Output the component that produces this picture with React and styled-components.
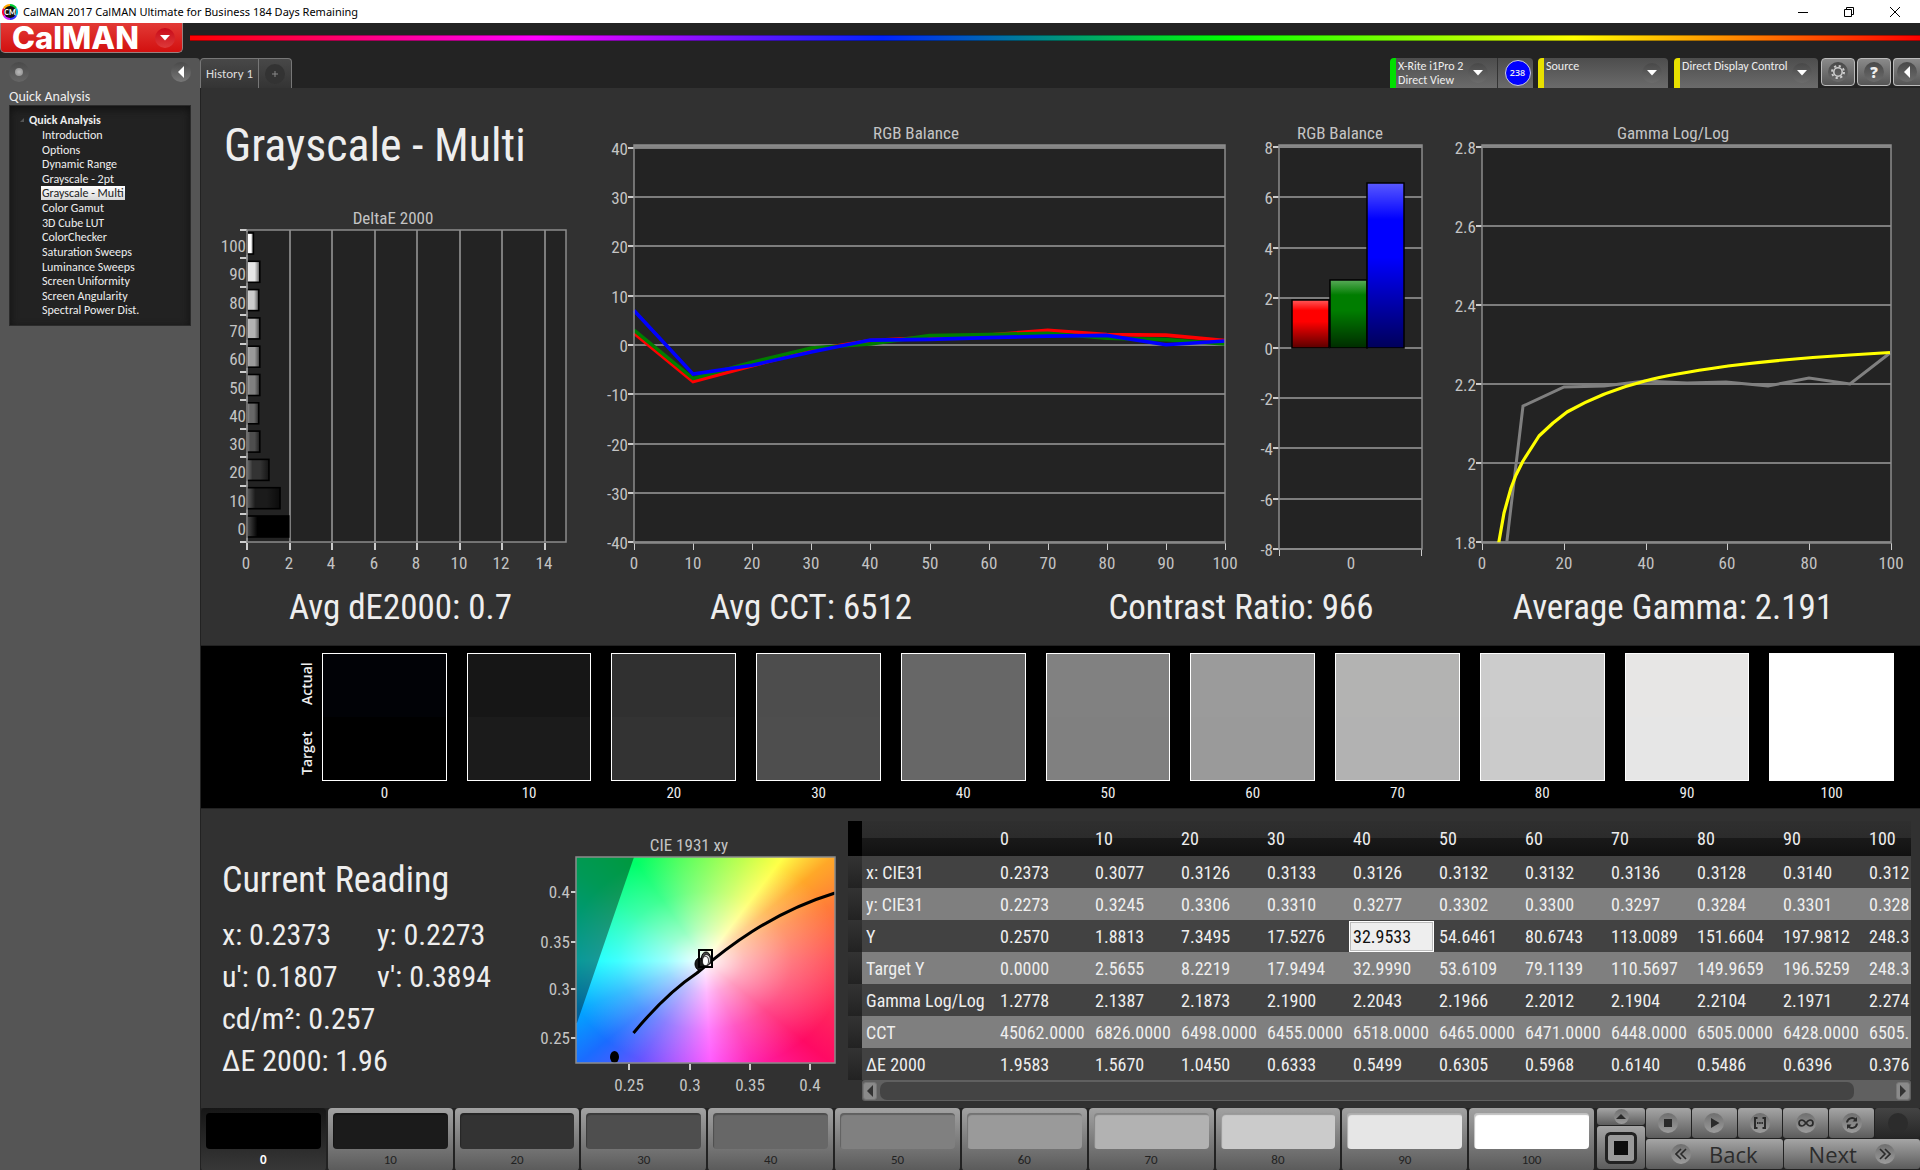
import React from "react";
import styled, { createGlobalStyle, css } from "styled-components";

const narrow = '"Roboto Condensed", "Carlito", "Lato", sans-serif';
const ui = '"Carlito", "Lato", sans-serif';

const GlobalStyle = createGlobalStyle`
  *, *::before, *::after { box-sizing: border-box; }
  body { margin: 0; background: #232323; color: #eee; font-family: ${ui}; overflow: hidden; }
  button, input { font: inherit; color: inherit; }
  button { margin: 0; padding: 0; border: 0; background: none; cursor: pointer; }
  h1, h2, p, ul, dl, dd, figure { margin: 0; padding: 0; font-weight: 400; }
  ul { list-style: none; }
`;

const Window = styled.div`
  display: flex;
  flex-direction: column;
  min-height: 100vh;
`;

const TitleBar = styled.div`
  display: flex;
  align-items: center;
  height: 23px;
  padding: 0 16px 0 2px;
  gap: 5px;
  background: #fff;
  color: #000;
  white-space: nowrap;
`;

const WindowTitle = styled.span`
  flex: 1;
  font: 11px "Noto Sans", sans-serif;
`;

const WindowControls = styled.div`
  display: flex;
  gap: 28px;
  button { display: flex; }
`;

const Brand = styled.header`
  display: flex;
  align-items: flex-start;
  gap: 7px;
  height: 35px;
`;

const LogoButton = styled.button`
  display: flex;
  align-items: center;
  justify-content: space-between;
  width: 183px;
  height: 30px;
  padding: 0 7px 0 11px;
  border: 1px solid #9a8080;
  border-top: 0;
  border-radius: 0 0 5px 5px;
  background: linear-gradient(#e23a36, #d3100f);
  color: #fff;
  font: 800 31px/28px Inter, sans-serif;
`;

const Round = styled.span`
  display: inline-flex;
  flex: none;
  align-items: center;
  justify-content: center;
  width: ${(p) => p.$size || 20}px;
  height: ${(p) => p.$size || 20}px;
  border-radius: 50%;
  background: ${(p) => p.$bg || "linear-gradient(#484848, #6c6c6c)"};
`;

const Rainbow = styled.div`
  flex: 1;
  height: 6px;
  margin-top: 12px;
  border: 1px solid rgba(0, 0, 0, 0.35);
  border-width: 1px 0;
  background: linear-gradient(90deg, #f00, #f0f 20%, #02f 40%, #0f0 60%, #ff0 80%, #f00) border-box;
`;

const Body = styled.div`
  flex: 1;
  display: grid;
  grid-template-columns: 200px minmax(0, 1fr);
`;

const Sidebar = styled.aside`
  padding: 4px 9px;
  background: #555;
  border-radius: 0 4px 0 0;
`;

const SideTop = styled.div`
  display: flex;
  justify-content: space-between;
  height: 20px;
`;

const SideTitle = styled.h2`
  margin-top: 7px;
  font-size: 14px;
  line-height: 16px;
`;

const Tree = styled.nav`
  padding: 6px 8px 7px 10px;
  min-height: 221px;
  border: 1px solid #2b2b2b;
  background: #222;
  box-shadow: inset 0 3px 8px #111;
  font-size: 12px;
`;

const TreeRoot = styled.div`
  display: flex;
  align-items: center;
  gap: 5px;
  height: 16px;
  font-weight: 700;
`;

const TreeList = styled.ul`
  display: grid;
  grid-auto-rows: 1fr;
  height: 190px;
  padding-left: 21px;
`;

const TreeLink = styled.a`
  display: inline-block;
  padding: 0 1px;
  line-height: 14px;
  color: inherit;
  text-decoration: none;
  white-space: nowrap;
  ${(p) => p.$active && css`background: linear-gradient(#fff, #d8d8d8); color: #222;`}
`;

const Main = styled.main`
  display: flex;
  flex-direction: column;
  min-width: 0;
`;

const TabRow = styled.div`
  display: flex;
  justify-content: space-between;
  height: 30px;
`;

const Tabs = styled.div`
  display: flex;
  border: 1px solid #777;
  border-bottom: 0;
  border-radius: 4px 4px 0 0;
  background: linear-gradient(#484848, #343434);
`;

const Tab = styled.button`
  display: flex;
  align-items: center;
  justify-content: center;
  width: ${(p) => p.$w}px;
  font-size: 13px;
  color: #ddd;
  & + & { border-left: 1px solid #777; }
`;

const Devices = styled.div`
  display: flex;
  overflow: hidden;
`;

const Device = styled.div`
  display: flex;
  width: ${(p) => p.$w}px;
  margin-right: ${(p) => p.$gap}px;
  border-radius: 4px 4px 0 0;
  border-left: 6px solid ${(p) => p.$color};
  background: linear-gradient(#4d4d4d, #6b6b6b);
`;

const DeviceButton = styled.button`
  flex: 1;
  display: flex;
  justify-content: space-between;
  padding: 1px 6px 0 2px;
  font-size: 12px;
  line-height: 14px;
  text-align: left;
  white-space: nowrap;
  ${Round} { margin-top: 4px; margin-left: 2px; }
`;

const Count = styled.button`
  display: flex;
  align-items: center;
  justify-content: center;
  width: 36px;
  margin-left: 3px;
  padding-left: 4px;
  border-left: 1px solid #333;
  span {
    width: 26px;
    height: 26px;
    border: 1px solid #ccd;
    border-radius: 50%;
    background: #00f;
    font: 600 9px/24px "Open Sans", sans-serif;
  }
`;

const Tool = styled.button`
  flex: none;
  width: 34px;
  height: 28px;
  margin-right: 2px;
  border: 1px solid #bbb;
  border-radius: 4px;
  background: linear-gradient(#8a8a8a, #555);
  &:last-child { width: 27px; margin: 0; border-right: 0; border-radius: 4px 0 0 4px; }
`;

const HelpMark = styled.b`
  font: 800 15px/20px "Open Sans", sans-serif;
`;

const Page = styled.div`
  flex: 1;
  display: flex;
  flex-direction: column;
  border-left: 1px solid #222;
  background: #313131;
`;

const ChartSection = styled.section`
  padding-top: 32px;
  padding-bottom: 9px;
`;

const Charts = styled.div`
  display: grid;
  grid-template-columns: 399fr 640fr 200fr 480fr;
  align-items: end;
`;

const Column = styled.div`
  display: flex;
  flex-direction: column;
`;

const Title = styled.h1`
  margin-bottom: 20px;
  padding-left: 23px;
  font: 46px/50px ${narrow};
  white-space: nowrap;
`;

const Plot = styled.svg`
  display: block;
  width: 100%;
  height: auto;
  overflow: visible;
  font: 17px ${narrow};
  fill: #c4c4c4;
`;

const Stats = styled.div`
  display: grid;
  grid-template-columns: 399fr 422fr 438fr 426fr 34fr;
  font: 35px/56px ${narrow};
  text-align: center;
  white-space: nowrap;
`;

const Band = styled.section`
  display: grid;
  grid-template-columns: 121px 1fr;
  padding: 7px 26px 3px 0;
  background: #000;
  border: 1px solid #222;
  border-width: 1px 0;
`;

const Sides = styled.div`
  display: grid;
  grid-template-rows: 62px 76px;
  justify-content: end;
  padding-right: 8px;
  font: 600 14px/14px "Open Sans", sans-serif;
  span {
    writing-mode: vertical-rl;
    transform: rotate(180deg);
    text-align: center;
  }
`;

const Swatches = styled.div`
  display: grid;
  grid-template-columns: repeat(11, 1fr);
  gap: 20px;
`;

const Swatch = styled.figure`
  font: 15px/24px ${narrow};
  text-align: center;
  div {
    height: 128px;
    border: 1px solid #fff;
    background: linear-gradient(${(p) => p.$actual} 50%, ${(p) => p.$target} 50%);
  }
`;

const Lower = styled.section`
  display: grid;
  grid-template-columns: 329fr 317fr 1064fr;
  padding: 6px 9px 0 0;
  height: 299px;
`;

const Reading = styled.div`
  padding: 42px 0 0 21px;
  font: 30px/42px ${narrow};
  white-space: nowrap;
  h2 { margin-bottom: 11px; font-size: 36px; line-height: 46px; }
`;

const Pair = styled.div`
  display: grid;
  grid-template-columns: 155px 1fr;
`;

const TablePane = styled.div`
  min-width: 0;
  padding: 6px 0 0 1px;
`;

const TableClip = styled.div`
  overflow: hidden;
`;

const Table = styled.table`
  width: 1103px;
  table-layout: fixed;
  border-collapse: collapse;
  font: 18px/24px ${narrow};
  text-align: left;
  th, td { padding: 1px 0 0 4px; font-weight: 400; white-space: nowrap; }
  thead tr { height: 35px; background: linear-gradient(#2f2f2f, #2b2b2b 50%, #191919 50%, #111); }
  tbody tr { height: 32px; background: #424242; }
  tbody tr:nth-child(even) { background: #7f7f7f; }
  td.mark, th.mark { background: linear-gradient(#333, #222); }
  th.mark { background: #000; }
  td.edit { padding: 0; }
`;

const CellInput = styled.input`
  display: block;
  width: 85px;
  height: 31px;
  padding: 1px 0 0 3px;
  border: 1px solid #fff;
  box-shadow: inset 0 0 0 1px #bbb;
  background: #eee;
  color: #111;
`;

const Scroll = styled.div`
  display: flex;
  align-items: center;
  gap: 3px;
  height: 21px;
  margin-left: 14px;
  padding: 0 1px;
  border-radius: 3px;
  background: #606060;
  button {
    display: flex;
    align-items: center;
    justify-content: center;
    width: 14px;
    height: 18px;
    border: 1px solid #777;
    border-radius: 3px;
    background: #8a8a8a;
  }
`;

const Thumb = styled.div`
  flex: 975;
  height: 18px;
  border-radius: 7px;
  background: #444;
`;

const Gap = styled.div`
  flex: 36;
`;

const Footer = styled.footer`
  display: flex;
  height: 62px;
  padding-bottom: 1px;
  background: #222;
`;

const Levels = styled.div`
  flex: 1;
  display: grid;
  grid-template-columns: repeat(11, 1fr);
  gap: 2px;
  margin-right: 3px;
`;

const Level = styled.button`
  display: flex;
  flex-direction: column;
  padding: 5px 5px 0;
  border-radius: 4px;
  background: ${(p) => (p.$on ? "linear-gradient(#161616, #383838)" : "linear-gradient(#a2a2a2, #5a5a5a)")};
  color: ${(p) => (p.$on ? "#fff" : "#222")};
  font-size: 13px;
  font-weight: ${(p) => (p.$on ? 700 : 400)};
  line-height: 22px;
  text-align: center;
  i {
    width: 100%;
    height: 36px;
    border-radius: 4px;
    background: ${(p) => p.$color};
    box-shadow: inset 1px 2px 1px rgba(0, 0, 0, 0.25);
  }
  span { width: 100%; }
`;

const metal = "linear-gradient(#a5a5a5, #5c5c5c)";

const PatternBox = styled.div`
  display: grid;
  grid-template-rows: 17px 1fr;
  gap: 1px;
  width: 48px;
  margin-right: 1px;
`;

const Key = styled.button`
  display: flex;
  align-items: center;
  justify-content: center;
  gap: 18px;
  overflow: hidden;
  border-radius: 3px;
  background: ${(p) => (p.$off ? "linear-gradient(#444, #262626)" : metal)};
  color: #2c2c2c;
  font: 500 22px/28px "Open Sans", sans-serif;
`;

const Transport = styled.div`
  display: grid;
  grid-template-rows: 30px 1fr;
  gap: 1px;
  width: 274px;
`;

const KeyRow = styled.div`
  display: grid;
  grid-template-columns: repeat(${(p) => p.$n}, 1fr);
  gap: 1px;
`;

const dim = "linear-gradient(#6f6f6f, #9c9c9c)";

const Down = () => (
  <svg width="10" height="6" aria-hidden="true"><path d="M0 0H10L5 5.5Z" fill="#fff" /></svg>
);
const Left = ({ color = "#fff" }) => (
  <svg width="6" height="12" aria-hidden="true"><path d="M6 0V12L0 6Z" fill={color} /></svg>
);

const steps = [0, 10, 20, 30, 40, 50, 60, 70, 80, 90, 100];
const grays = ["#000", "#1b1b1b", "#333", "#4e4e4e", "#676767", "#808080", "#9a9a9a", "#b2b2b2", "#cbcbcb", "#e6e6e6", "#fff"];
const actuals = ["#010206", "#161616", "#303030", "#4d4d4d", "#676767", "#818181", "#9b9b9b", "#b3b3b2", "#cccccc", "#e7e6e5", "#fff"];

const pages = ["Introduction", "Options", "Dynamic Range", "Grayscale - 2pt", "Grayscale - Multi", "Color Gamut", "3D Cube LUT", "ColorChecker", "Saturation Sweeps", "Luminance Sweeps", "Screen Uniformity", "Screen Angularity", "Spectral Power Dist."];

function Frame({ box, title, titleX, xTicks, yTicks, band, children, baseline }) {
  const [x0, y0, x1, y1] = box;
  return (
    <>
      <text x={titleX} y={baseline} textAnchor="middle">{title}</text>
      <rect x={x0} y={y0} width={x1 - x0} height={y1 - y0} fill="#232323" />
      {yTicks.map(([v, y]) => (
        <g key={v}>
          <path d={`M${x0} ${y}H${x1}`} stroke="#7d7d7d" strokeWidth="2" shapeRendering="crispEdges" />
          <path d={`M${x0 - 6} ${y}H${x0}`} stroke="#ccc" strokeWidth="2" shapeRendering="crispEdges" />
          <text x={x0 - 6} y={y + 7} textAnchor="end">{v}</text>
        </g>
      ))}
      {xTicks.map(([v, x]) => (
        <g key={v}>
          <path d={`M${x} ${y1}V${y1 + 7}`} stroke="#ccc" shapeRendering="crispEdges" />
          <text x={x} y={y1 + 26} textAnchor="middle">{v}</text>
        </g>
      ))}
      {band && <rect x={x0} y={y0} width={x1 - x0} height="3" fill="#858585" />}
      {children}
      <rect x={x0} y={y0} width={x1 - x0} height={y1 - y0} fill="none" stroke="#8c8c8c" strokeWidth="1.5" />
    </>
  );
}

const deltas = [0.3, 0.6, 0.55, 0.6, 0.6, 0.6, 0.55, 0.6, 1.03, 1.55, 1.96];

function DeltaChart() {
  return (
    <Plot viewBox="0 0 399 390" role="img" aria-label="DeltaE 2000">
      <defs>
        <linearGradient id="barShade">
          <stop offset="0" stopColor="#fff" stopOpacity=".3" />
          <stop offset=".25" stopColor="#fff" stopOpacity="0" />
          <stop offset=".6" stopColor="#000" stopOpacity="0" />
          <stop offset="1" stopColor="#000" stopOpacity=".6" />
        </linearGradient>
      </defs>
      <text x="192" y="34" textAnchor="middle">DeltaE 2000</text>
      <rect x="46" y="40" width="319" height="312" fill="#232323" />
      {[0, 2, 4, 6, 8, 10, 12, 14].map((v) => {
        const x = Math.round(46 + v * 21.25);
        return (
          <g key={v}>
            <path d={`M${x} 40V352`} stroke="#7d7d7d" strokeWidth="2" shapeRendering="crispEdges" />
            <path d={`M${x} 353V360`} stroke="#ccc" strokeWidth="2" shapeRendering="crispEdges" />
            <text x={x - 1} y="379" textAnchor="middle">{v}</text>
          </g>
        );
      })}
      {deltas.map((d, i) => {
        const y = 43 + i * 28.3;
        return (
          <g key={i}>
            <path d={`M39 ${Math.round(40 + i * 28.4)}H46`} stroke="#ccc" strokeWidth="2" shapeRendering="crispEdges" />
            <text x="45" y={y + 19} textAnchor="end">{100 - i * 10}</text>
            <rect x="46" y={y} width={d * 21.3} height="21" fill={grays[10 - i]} />
            <rect x="46" y={y} width={d * 21.3} height="21" fill="url(#barShade)" stroke="#000" strokeWidth="1.6" />
          </g>
        );
      })}
      <path d="M39 352H46" stroke="#ccc" strokeWidth="2" shapeRendering="crispEdges" />
      <rect x="46" y="40" width="319" height="312" fill="none" stroke="#8c8c8c" strokeWidth="1.5" />
    </Plot>
  );
}

const series = [
  ["#f00", [2.6, -7.2, -4, -0.8, 1.1, 1.7, 2.2, 3.2, 2.3, 2.2, 1.1]],
  ["#007d00", [3.2, -6.6, -3.3, -0.4, 0.4, 2.1, 2.3, 2.6, 1.6, 1.3, 0.4]],
  ["#00f", [7.2, -5.7, -3.9, -1.2, 1.2, 1.35, 1.7, 2, 2.15, 0.25, 1]],
];

function BalanceChart() {
  return (
    <Plot viewBox="0 0 640 460" role="img" aria-label="RGB Balance by level">
      <Frame
        box={[34, 25, 625, 423]} title="RGB Balance" titleX={316} baseline={19} band
        xTicks={steps.map((s) => [s, 34 + Math.round(s * 5.91)])}
        yTicks={[40, 30, 20, 10, 0, -10, -20, -30, -40].map((v) => [v, Math.round(225 - v * 4.93)])}
      >
        {series.map(([c, v]) => (
          <polyline key={c} fill="none" stroke={c} strokeWidth="3.6" points={v.map((n, i) => `${34 + i * 59.1},${226 - n * 4.93}`).join(" ")} />
        ))}
      </Frame>
    </Plot>
  );
}

function BarsChart() {
  const bars = [["#f00", 52, 180, "r"], ["#007d00", 90, 160, "g"], ["#00f", 127, 63, "b"]];
  return (
    <Plot viewBox="0 0 200 460" role="img" aria-label="RGB Balance">
      <defs>
        <linearGradient id="gloss" x2="0" y2="1">
          <stop offset="0" stopColor="#fff" stopOpacity=".35" />
          <stop offset=".22" stopColor="#fff" stopOpacity="0" />
          <stop offset=".45" stopColor="#000" stopOpacity="0" />
          <stop offset="1" stopColor="#000" stopOpacity=".65" />
        </linearGradient>
      </defs>
      <Frame
        box={[39, 25, 182, 429]} title="RGB Balance" titleX={100} baseline={19} band
        xTicks={[]}
        yTicks={[8, 6, 4, 2, 0, -2, -4, -6, -8].map((v) => [v, Math.round(228 - v * 25.1)])}
      >
        <path d="M39.5 429V436M181.5 429V436" stroke="#ccc" />
        <text x="111" y="449" textAnchor="middle">0</text>
        {bars.map(([c, x, y, id]) => (
          <g key={id}>
            <rect x={x} y={y} width="37" height={228 - y} fill={c} />
            <rect x={x} y={y} width="37" height={228 - y} fill="url(#gloss)" stroke="#000" strokeWidth="1.5" />
          </g>
        ))}
      </Frame>
    </Plot>
  );
}

function GammaChart() {
  return (
    <Plot viewBox="0 0 480 460" role="img" aria-label="Gamma Log/Log">
      <Frame
        box={[42, 25, 451, 423]} title="Gamma Log/Log" titleX={233} baseline={19} band
        xTicks={[0, 20, 40, 60, 80, 100].map((v) => [v, 42 + Math.round(v * 4.09)])}
        yTicks={["2.8", "2.6", "2.4", "2.2", "2", "1.8"].map((v, i) => [v, 27 + i * 79])}
      >
        <polyline fill="none" stroke="#808080" strokeWidth="3" points="66.7,423 83,286 124,267 164,266 205,261 247,263 286,262 328,266 369,258 410,264 450,233" />
        <path
          fill="none" stroke="#ff0" strokeWidth="3.2" strokeLinejoin="round"
          d="M58.7 423L64 393L71 368L76 355L83 341L99 316L113 303L127 292C150 279 177 268 205 261C231 254 260 250 288 246C327 241 369 237.500 410 235L450 232.500"
        />
      </Frame>
    </Plot>
  );
}

const Gamut = styled.div`
  width: 100%;
  height: 100%;
  background:
    radial-gradient(140px 112px at 129px 104px, #fff, rgba(255, 255, 255, 0.6) 28%, rgba(255, 255, 255, 0.25) 62%, rgba(255, 255, 255, 0) 100%),
    conic-gradient(from 0deg at 129px 104px, #78ff50, #c0ff48 21deg, #ffff48 37deg, #ffa828 51deg, #ff7c38 66deg, #ff4c54 90deg, #ff0a64 129deg, #ff20b0 155deg, #ff50ff 177deg, #6454ff 213deg, #1a6cff 231deg, #00a8ff 249deg, #00ffff 270deg, #00ff90 305deg, #00ff68 325deg, #48ff58 345deg, #78ff50 360deg);
`;

function CieChart() {
  return (
    <Plot viewBox="0 0 317 290" role="img" aria-label="CIE 1931 xy">
      <text x="159" y="36" textAnchor="middle">CIE 1931 xy</text>
      <foreignObject x="46" y="42" width="259" height="206"><Gamut /></foreignObject>
      <path d="M46 42H104L47 208H46Z" fill="#000" fillOpacity=".4" />
      {[["0.4", 77], ["0.35", 127], ["0.3", 174], ["0.25", 223]].map(([v, y]) => (
        <g key={v}>
          <path d={`M41 ${y}H46`} stroke="#ccc" strokeWidth="2" shapeRendering="crispEdges" />
          <text x="40" y={y + 6} textAnchor="end">{v}</text>
        </g>
      ))}
      {[["0.25", 99], ["0.3", 160], ["0.35", 220], ["0.4", 280]].map(([v, x]) => (
        <g key={v}>
          <path d={`M${x} 249V255`} stroke="#ccc" strokeWidth="2" shapeRendering="crispEdges" />
          <text x={x} y="276" textAnchor="middle">{v}</text>
        </g>
      ))}
      <path d="M103.500 218C120 198 143 174 167 158C195 134 240 98 305 78" fill="none" stroke="#000" strokeWidth="3" />
      <ellipse cx="84.500" cy="242" rx="4.500" ry="6" fill="#000" />
      <ellipse cx="169.500" cy="149" rx="4.500" ry="6" fill="#1b1b1b" stroke="#000" />
      <ellipse cx="176" cy="143" rx="4.500" ry="6" fill="#444" stroke="#000" />
      <rect x="169" y="135" width="13" height="17" fill="none" stroke="#000" strokeWidth="2" />
      <ellipse cx="176.500" cy="145" rx="4" ry="5.500" fill="#ddd" stroke="#222" />
      <ellipse cx="175.500" cy="146" rx="3" ry="4.500" fill="#fff" stroke="#000" strokeWidth=".7" />
      <rect x="46" y="42" width="259" height="206" fill="none" stroke="#8c8c8c" strokeWidth="1.5" />
    </Plot>
  );
}

const rows = [
  ["x: CIE31", "0.2373", "0.3077", "0.3126", "0.3133", "0.3126", "0.3132", "0.3132", "0.3136", "0.3128", "0.3140", "0.312"],
  ["y: CIE31", "0.2273", "0.3245", "0.3306", "0.3310", "0.3277", "0.3302", "0.3300", "0.3297", "0.3284", "0.3301", "0.328"],
  ["Y", "0.2570", "1.8813", "7.3495", "17.5276", "32.9533", "54.6461", "80.6743", "113.0089", "151.6604", "197.9812", "248.3"],
  ["Target Y", "0.0000", "2.5655", "8.2219", "17.9494", "32.9990", "53.6109", "79.1139", "110.5697", "149.9659", "196.5259", "248.3"],
  ["Gamma Log/Log", "1.2778", "2.1387", "2.1873", "2.1900", "2.2043", "2.1966", "2.2012", "2.1904", "2.2104", "2.1971", "2.274"],
  ["CCT", "45062.0000", "6826.0000", "6498.0000", "6455.0000", "6518.0000", "6465.0000", "6471.0000", "6448.0000", "6505.0000", "6428.0000", "6505."],
  ["ΔE 2000", "1.9583", "1.5670", "1.0450", "0.6333", "0.5499", "0.6305", "0.5968", "0.6140", "0.5486", "0.6396", "0.376"],
];

function DataTable() {
  return (
    <TablePane>
      <TableClip>
        <Table>
          <colgroup>
            <col style={{ width: 14 }} /><col style={{ width: 134 }} /><col style={{ width: 95 }} />
            {steps.slice(1).map((s) => <col key={s} style={{ width: 86 }} />)}
          </colgroup>
          <thead>
            <tr><th className="mark" /><th />{steps.map((s) => <th key={s} scope="col">{s}</th>)}</tr>
          </thead>
          <tbody>
            {rows.map(([name, ...vals]) => (
              <tr key={name}>
                <td className="mark" />
                <th scope="row">{name}</th>
                {vals.map((v, i) =>
                  name === "Y" && i === 4
                    ? <td key={i} className="edit"><CellInput aria-label="Y at 40" defaultValue={v} /></td>
                    : <td key={i}>{v}</td>
                )}
              </tr>
            ))}
          </tbody>
        </Table>
      </TableClip>
      <Scroll>
        <button aria-label="Scroll left"><Left color="#333" /></button>
        <Thumb />
        <Gap />
        <button aria-label="Scroll right"><svg width="6" height="12"><path d="M0 0V12L6 6Z" fill="#333" /></svg></button>
      </Scroll>
    </TablePane>
  );
}

const keyIcons = [
  ["Stop", <rect x="6" y="6" width="8" height="8" fill="#2a2a2a" />],
  ["Play", <path d="M7 5V15L15.500 10Z" fill="#2a2a2a" />],
  ["Read series", <g fill="none" stroke="#2a2a2a" strokeWidth="2"><path d="M7.500 5H5V15H7.500M12.500 5H15V15H12.500" /><path d="M7 10H13" strokeDasharray="1.500 .7" strokeWidth="2" /></g>],
  ["Read continuous", <path d="M10 10C8 7.500 7 7 6 7A3 3 0 0 0 6 13C7 13 8 12.500 10 10C12 7.500 13 7 14 7A3 3 0 0 1 14 13C13 13 12 12.500 10 10Z" fill="none" stroke="#2a2a2a" strokeWidth="1.700" />],
  ["Refresh", <g fill="none" stroke="#2a2a2a" strokeWidth="2"><path d="M5 9.500A5 5 0 0 1 13.500 6.500M15 10.500A5 5 0 0 1 6.500 13.500" /><path d="M15 4V8.500H10.500ZM5 16V11.500H9.500Z" fill="#2a2a2a" stroke="none" /></g>],
];

export default function App() {
  return (
    <Window>
      <GlobalStyle />
      <TitleBar>
        <svg width="16" height="16" viewBox="0 0 16 16" aria-hidden="true">
          <path d="M8 8L8 0A8 8 0 0 1 14.900 4Z" fill="#0c3" /><path d="M8 8L14.900 4A8 8 0 0 1 14.900 12Z" fill="#0bd" />
          <path d="M8 8L14.900 12A8 8 0 0 1 8 16Z" fill="#33f" /><path d="M8 8L8 16A8 8 0 0 1 1.100 12Z" fill="#c2f" />
          <path d="M8 8L1.100 12A8 8 0 0 1 1.100 4Z" fill="#f03" /><path d="M8 8L1.100 4A8 8 0 0 1 8 0Z" fill="#fa0" />
          <circle cx="8" cy="8" r="6" fill="#111" />
          <text x="8" y="10.500" textAnchor="middle" fill="#fff" fontFamily="Lato" fontWeight="900" fontSize="7">CM</text>
        </svg>
        <WindowTitle>CalMAN 2017 CalMAN Ultimate for Business 184 Days Remaining</WindowTitle>
        <WindowControls>
          <button aria-label="Minimize"><svg width="18" height="12"><path d="M4 6.500H14" stroke="#000" /></svg></button>
          <button aria-label="Restore"><svg width="18" height="12"><path d="M4.500 3.500H11.500V10.500H4.500ZM6.500 3.500V1.500H13.500V8.500H11.500" fill="none" stroke="#000" /></svg></button>
          <button aria-label="Close"><svg width="18" height="12"><path d="M4 1L14 11M14 1L4 11" stroke="#000" /></svg></button>
        </WindowControls>
      </TitleBar>
      <Brand>
        <LogoButton aria-label="CalMAN menu">CalMAN<Round $bg="linear-gradient(#c80a18, #dd3a3a)"><Down /></Round></LogoButton>
        <Rainbow />
      </Brand>
      <Body>
        <Sidebar>
          <SideTop>
            <Round $bg="linear-gradient(#4a4a4a, #666)"><Round $size={8} $bg="radial-gradient(#bbb, #888)" /></Round>
            <button aria-label="Collapse sidebar"><Round $bg="linear-gradient(#4a4a4a, #777)"><Left /></Round></button>
          </SideTop>
          <SideTitle>Quick Analysis</SideTitle>
          <Tree aria-label="Workflow">
            <TreeRoot><svg width="4" height="4"><path d="M4 0V4H0Z" fill="#555" /></svg>Quick Analysis</TreeRoot>
            <TreeList>
              {pages.map((p) => <li key={p}><TreeLink href="#" $active={p === "Grayscale - Multi"}>{p}</TreeLink></li>)}
            </TreeList>
          </Tree>
        </Sidebar>
        <Main>
          <TabRow>
            <Tabs>
              <Tab $w={57}>History 1</Tab>
              <Tab $w={33} aria-label="Add tab"><Round $bg="#333"><svg width="6" height="6"><path d="M3 0V6M0 3H6" stroke="#888" /></svg></Round></Tab>
            </Tabs>
            <Devices>
              <Device $w={143} $gap={5} $color="#00e000">
                <DeviceButton><span>X-Rite i1Pro 2<br />Direct View</span><Round><Down /></Round></DeviceButton>
                <Count><span>238</span></Count>
              </Device>
              <Device $w={130} $gap={6} $color="#e8e000"><DeviceButton>Source<Round><Down /></Round></DeviceButton></Device>
              <Device $w={144} $gap={3} $color="#e8e000"><DeviceButton>Direct Display Control<Round><Down /></Round></DeviceButton></Device>
              <Tool aria-label="Settings">
                <Round><svg width="14" height="14" viewBox="0 0 14 14"><circle cx="7" cy="7" r="4.200" fill="none" stroke="#ccc" strokeWidth="1.600" /><circle cx="7" cy="7" r="6" fill="none" stroke="#ccc" strokeWidth="2" strokeDasharray="2.200 2.510" /></svg></Round>
              </Tool>
              <Tool aria-label="Help"><Round><HelpMark>?</HelpMark></Round></Tool>
              <Tool aria-label="Collapse toolbar"><Round><Left /></Round></Tool>
            </Devices>
          </TabRow>
          <Page>
            <ChartSection>
              <Charts>
                <Column><Title>Grayscale - Multi</Title><DeltaChart /></Column>
                <BalanceChart />
                <BarsChart />
                <GammaChart />
              </Charts>
              <Stats>
                <p>Avg dE2000: 0.7</p><p>Avg CCT: 6512</p><p>Contrast Ratio: 966</p><p>Average Gamma: 2.191</p>
              </Stats>
            </ChartSection>
            <Band>
              <Sides><span>Actual</span><span>Target</span></Sides>
              <Swatches>
                {steps.map((s, i) => (
                  <Swatch key={s} $actual={actuals[i]} $target={grays[i]}><div /><figcaption>{s}</figcaption></Swatch>
                ))}
              </Swatches>
            </Band>
            <Lower>
              <Reading>
                <h2>Current Reading</h2>
                <Pair><span>x: 0.2373</span><span>y: 0.2273</span></Pair>
                <Pair><span>u': 0.1807</span><span>v': 0.3894</span></Pair>
                <p>cd/m²: 0.257</p>
                <p>ΔE 2000: 1.96</p>
              </Reading>
              <CieChart />
              <DataTable />
            </Lower>
            <Footer>
              <Levels>
                {steps.map((s, i) => <Level key={s} $on={i === 0} $color={grays[i]}><i /><span>{s}</span></Level>)}
              </Levels>
              <PatternBox>
                <Key aria-label="Expand"><Round $size={15} $bg={dim}><svg width="10" height="5"><path d="M0 5H10L5 0Z" fill="#2a2a2a" /></svg></Round></Key>
                <Key aria-label="Pattern window">
                  <svg width="32" height="32"><rect x="1.500" y="1.500" width="29" height="29" rx="4" fill="#999" stroke="#222" strokeWidth="3" /><rect x="9" y="9" width="14" height="14" fill="#0c0c0c" /></svg>
                </Key>
              </PatternBox>
              <Transport>
                <KeyRow $n={6}>
                  {keyIcons.map(([n, icon]) => <Key key={n} aria-label={n}><Round $bg={dim}><svg width="20" height="20">{icon}</svg></Round></Key>)}
                  <Key $off aria-label="Record"><Round $bg="#2c2c2c" /></Key>
                </KeyRow>
                <KeyRow $n={2}>
                  <Key><Round $bg={dim}><svg width="12" height="12"><path d="M6 1L1 6L6 11M11 1L6 6L11 11" fill="none" stroke="#2a2a2a" strokeWidth="1.600" /></svg></Round>Back</Key>
                  <Key>Next<Round $bg={dim}><svg width="12" height="12"><path d="M1 1L6 6L1 11M6 1L11 6L6 11" fill="none" stroke="#2a2a2a" strokeWidth="1.600" /></svg></Round></Key>
                </KeyRow>
              </Transport>
            </Footer>
          </Page>
        </Main>
      </Body>
    </Window>
  );
}
